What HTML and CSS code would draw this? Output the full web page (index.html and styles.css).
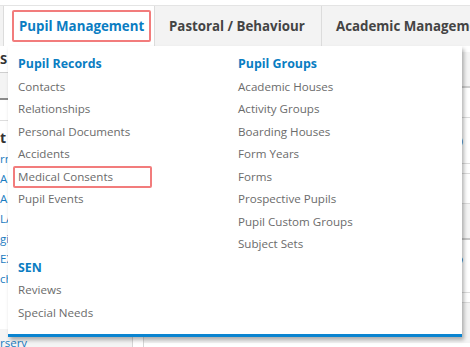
FILE: index.html
```html
<!DOCTYPE html>
<html lang="en">
  <head>
    <meta charset="UTF-8" />
    <meta name="viewport" content="width=device-width, initial-scale=1.0" />
    <title>Pupil Management</title>
    <link rel="stylesheet" href="styles.css">
  </head>
  <body>
    <nav class="tabs">
      <div class="tab edge"></div>
      <div class="tab active"><span class="tab-box">Pupil Management</span></div>
      <div class="tab pastoral">Pastoral / Behaviour</div>
      <div class="tab">Academic Management</div>
    </nav>

    <div class="main">
      <aside class="side">
        <div class="side-head">S</div>
        <div class="side-bar"></div>
        <div class="side-row"></div>
        <div class="side-title">t</div>
        <ul class="side-links">
          <li>rn</li>
          <li>A</li>
          <li>A</li>
          <li>LA</li>
          <li>gi</li>
          <li>EX</li>
          <li>ch</li>
        </ul>
        <div class="side-foot">rsery</div>
      </aside>

      <section class="content">
        <div class="row head"></div>
        <div class="row"></div>
        <div class="row tall"><span>(Boarding)</span></div>
        <div class="row thin"></div>
        <div class="row"></div>
        <div class="row thin dark"></div>
        <div class="row note"><span>Who</span></div>
        <div class="row thin"></div>
        <div class="row foot"></div>
      </section>
    </div>

    <div class="dropdown">
      <div class="col first">
        <div class="menu-head">Pupil Records</div>
        <a class="menu-item">Contacts</a>
        <a class="menu-item">Relationships</a>
        <a class="menu-item">Personal Documents</a>
        <a class="menu-item">Accidents</a>
        <a class="menu-item focused">Medical Consents</a>
        <a class="menu-item">Pupil Events</a>

        <div class="menu-head group">SEN</div>
        <a class="menu-item">Reviews</a>
        <a class="menu-item">Special Needs</a>
      </div>
      <div class="col second">
        <div class="menu-head">Pupil Groups</div>
        <a class="menu-item">Academic Houses</a>
        <a class="menu-item">Activity Groups</a>
        <a class="menu-item">Boarding Houses</a>
        <a class="menu-item">Form Years</a>
        <a class="menu-item">Forms</a>
        <a class="menu-item">Prospective Pupils</a>
        <a class="menu-item">Pupil Custom Groups</a>
        <a class="menu-item">Subject Sets</a>
      </div>
    </div>
  </body>
</html>
```

FILE: styles.css
```css
body {
  margin: 0;
  padding-top: 5px;
  font-family: "Open Sans", "DejaVu Sans", sans-serif;
  background-color: #fff;
  overflow: hidden;
}
.tabs {
  display: flex;
  height: 40px;
  border-top: 1px solid #e4e4e4;
  background-color: #f3f3f3;
}
.tab {
  flex: none;
  padding: 0 14px;
  line-height: 40px;
  font-size: 13.3px;
  font-weight: bold;
  color: #444;
  white-space: nowrap;
  border-right: 1px solid #dcdcdc;
}
.tab.edge {
  width: 3px;
  padding: 0;
}
.tab.active {
  width: 151px;
  padding: 4px 3px 4px 8px;
  box-sizing: border-box;
  background-color: #fff;
  line-height: 28px;
}
.tab-box {
  display: block;
  height: 28px;
  padding-left: 5px;
  border: 2px solid #f27c7c;
  border-radius: 2px;
  color: #0a7dc2;
}
.tab.pastoral {
  width: 152px;
  padding: 0 0 0 14px;
}

.main {
  display: flex;
  height: 301px;
}
.side {
  width: 141px;
  border-right: 1px solid #d6d6d6;
  font-size: 11.5px;
}
.side-head {
  height: 26px;
  line-height: 26px;
  font-size: 13px;
  font-weight: bold;
  color: #333;
  border-bottom: 1px solid #cfcfcf;
}
.side-bar {
  height: 25px;
  background-color: #f4f4f4;
  border-bottom: 2px solid #8a8a8a;
}
.side-row {
  height: 20px;
  border-bottom: 1px solid #ddd;
}
.side-title {
  padding-top: 6px;
  line-height: 22px;
  font-size: 14px;
  font-weight: bold;
  color: #333;
}
.side-links {
  list-style: none;
  margin: 0;
  padding: 0;
  color: #1a7cc1;
}
.side-links li {
  line-height: 20px;
}
.side-foot {
  margin-top: 40px;
  padding-top: 6px;
  line-height: 16px;
  color: #1a7cc1;
  background-color: #f4f4f4;
}
.content {
  flex: 1;
  margin-left: 10px;
  border-left: 1px solid #d6d6d6;
  font-size: 11.5px;
  color: #333;
}
.row {
  height: 29px;
  border-bottom: 1px solid #dcdcdc;
  text-align: right;
  padding-right: 7px;
}
.row.head {
  height: 34px;
  margin-top: 6px;
  background-color: #f5f5f5;
  border-bottom: 2px solid #cfcfcf;
}
.row.tall {
  height: 45px;
  line-height: 26px;
}
.row.tall span {
  display: inline-block;
  padding-top: 10px;
}
.row.thin {
  height: 9px;
}
.row.dark {
  height: 34px;
  background-color: #f5f5f5;
  border-bottom: 2px solid #c8c8c8;
}
.row.note {
  height: 52px;
  line-height: 40px;
  font-weight: bold;
  font-style: italic;
  text-align: left;
  padding-left: 295px;
}
.row.foot {
  height: 40px;
  border-bottom: none;
  background-color: #f4f4f4;
}

.dropdown {
  position: absolute;
  top: 46px;
  left: 8px;
  width: 449px;
  height: 281px;
  padding: 7px 0 0 5px;
  box-sizing: content-box;
  display: flex;
  background-color: #fff;
  border-bottom: 3px solid #0a84d0;
  box-shadow: 2px 3px 4px rgba(0, 0, 0, 0.3);
}
.col {
  display: flex;
  flex-direction: column;
}
.col.first {
  width: 139px;
}
.col.second {
  margin-left: 81px;
}
.menu-head {
  height: 22.5px;
  line-height: 22.5px;
  padding: 0 5px;
  font-size: 12.4px;
  font-weight: bold;
  color: #0a7dc2;
}
.menu-head.group {
  margin-top: 46px;
}
.menu-item {
  height: 22.5px;
  line-height: 22.5px;
  padding: 0 5px;
  font-size: 11.6px;
  color: #6b6b6b;
  white-space: nowrap;
}
.menu-item.focused {
  box-shadow: inset 0 0 0 2px #f27c7c;
  border-radius: 2px;
}
```
